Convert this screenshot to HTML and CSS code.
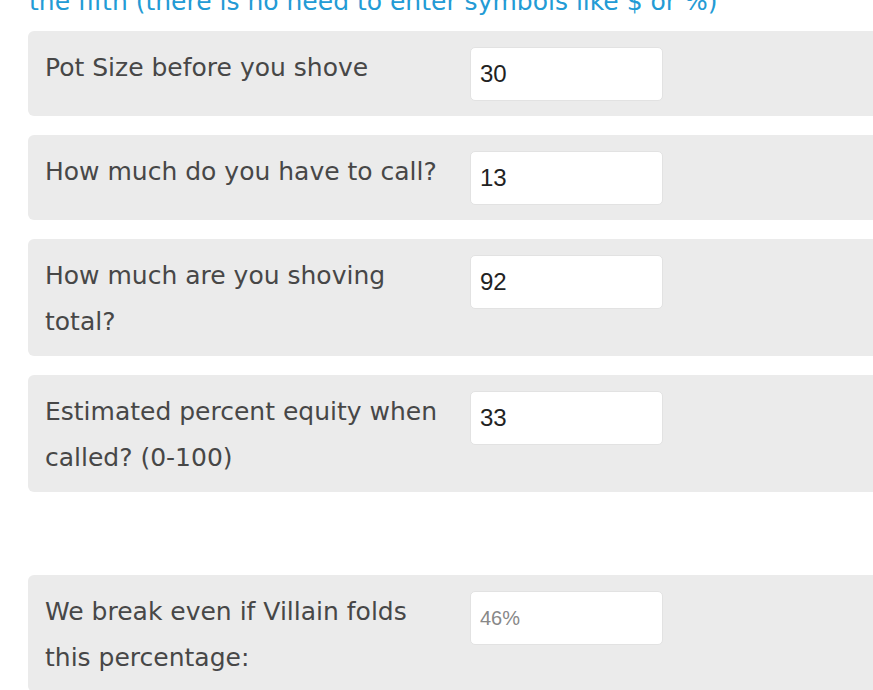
FILE: index.html
```html
<!DOCTYPE html>
<html>
<head>
<meta charset="utf-8">
<title>Shove Calculator</title>
<link rel="stylesheet" href="styles.css">
</head>
<body>
<p class="intro">the fifth (there is no need to enter symbols like $ or %)</p>
<div class="form">
  <div class="row">
    <label class="label">Pot Size before you shove</label>
    <input class="field" type="text" value="30">
  </div>
  <div class="row">
    <label class="label">How much do you have to call?</label>
    <input class="field" type="text" value="13">
  </div>
  <div class="row">
    <label class="label">How much are you shoving total?</label>
    <input class="field" type="text" value="92">
  </div>
  <div class="row">
    <label class="label">Estimated percent equity when called? (0-100)</label>
    <input class="field" type="text" value="33">
  </div>
  <div class="spacer"></div>
  <div class="row">
    <label class="label">We break even if Villain folds this percentage:</label>
    <input class="field result" type="text" value="46%" readonly>
  </div>
</div>
</body>
</html>
```
FILE: styles.css
```css
html {
  overflow: hidden;
}
body {
  margin: 0;
  background: #ffffff;
  font-family: "DejaVu Sans", sans-serif;
}
.intro {
  margin: -15px 0 12px 29px;
  font-size: 25px;
  line-height: 34px;
  color: #239bd5;
  white-space: nowrap;
}
.form {
  display: flex;
  flex-direction: column;
  gap: 19px;
  margin-left: 28px;
  margin-right: -30px;
}
.row {
  display: flex;
  align-items: flex-start;
  background: #ebebeb;
  border-radius: 6px;
  padding: 14px 0 0 17px;
}
.label {
  width: 405px;
  margin-bottom: 11px;
  font-size: 25px;
  line-height: 46px;
  color: #474747;
}
.field {
  box-sizing: border-box;
  width: 193px;
  height: 54px;
  margin: 2px 0 15px 20px;
  padding: 0 9px;
  border: 1px solid #e2e2e2;
  border-radius: 5px;
  background: #ffffff;
  font-family: "Liberation Sans", Arial, sans-serif;
  font-size: 24px;
  color: #222222;
  outline: none;
}
.field.result {
  font-size: 20px;
  color: #888888;
}
.spacer {
  height: 45px;
}
```
